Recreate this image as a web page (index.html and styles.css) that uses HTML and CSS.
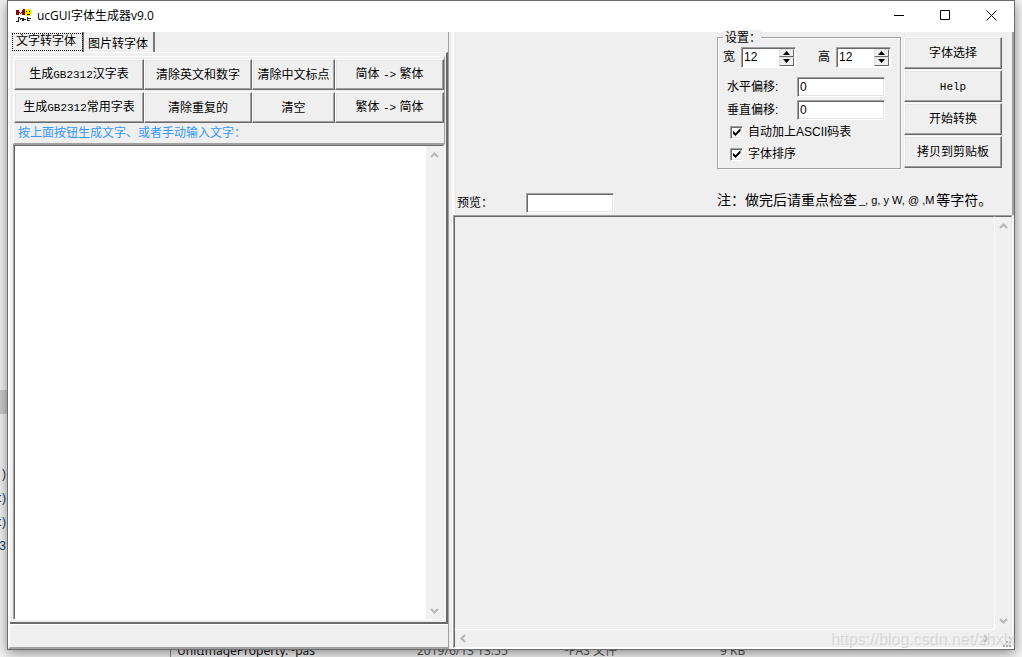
FILE: index.html
```html
<!DOCTYPE html>
<html lang="zh-CN">
<head>
<meta charset="utf-8">
<title>ucGUI字体生成器v9.0</title>
<link rel="stylesheet" href="styles.css">
</head>
<body>
<div class="desktop">
  <div class="behind-left">
    <span class="behind-selected"></span>
    <span>)</span><span>:)</span><span>:)</span><span>3</span>
  </div>
  <div class="behind-row">
    <span class="file-name">UnitImageProperty.~pas</span>
    <span class="file-date">2019/6/13 13:55</span>
    <span class="file-type">~PAS 文件</span>
    <span class="file-size">9 KB</span>
  </div>
</div>
<main class="window">
  <header class="titlebar">
    <svg class="logo" width="16" height="16" viewBox="0 0 16 16" shape-rendering="crispEdges" aria-hidden="true">
      <path fill="#8b0000" d="M0 2h3v2h1v1h1V4h1V2h3v5H6V5H5v1H4V5H3v2H0zM7 1h2v1H7z"/>
      <path fill="#f5f000" d="M10 1h4v1h1v1h1v3h-1v1h-1v1h-4V7H9V2h1z"/>
      <path fill="#222" d="M10 3h1v1h-1zM13 3h1v1h-1zM11 6h3v1h-3z"/>
      <path fill="#222" d="M2 9h2v1H2zM2 10h1v3H2zM0 13h3v1H0zM4 10h3v3H6v-2H5v1H4zM7 10h1v1h2v1H8v1H7zM11 9h1v1h3v1h-3v1h2v1h-3z"/>
    </svg>
    <h1 class="title">ucGUI字体生成器v9.0</h1>
    <div class="caption-buttons">
      <button aria-label="最小化"><svg width="11" height="11"><path d="M0 5.5h10"/></svg></button>
      <button aria-label="最大化"><svg width="11" height="11"><path d="M.5.5h9v9h-9z"/></svg></button>
      <button aria-label="关闭"><svg width="11" height="11"><path d="M.5.5l10 10M10.5.5l-10 10"/></svg></button>
    </div>
  </header>
  <div class="content">
    <section class="left-pane">
      <div class="tabs" role="tablist">
        <button class="tab tab-active" role="tab" aria-selected="true">文字转字体</button>
        <button class="tab" role="tab" aria-selected="false">图片转字体</button>
      </div>
      <div class="tab-page">
        <div class="tool-panel">
          <div class="tool-grid">
            <button class="btn">生成<span class="mono">GB2312</span>汉字表</button>
            <button class="btn">清除英文和数字</button>
            <button class="btn">清除中文标点</button>
            <button class="btn">简体 <span class="mono">-&gt;</span> 繁体</button>
            <button class="btn">生成<span class="mono">GB2312</span>常用字表</button>
            <button class="btn">清除重复的</button>
            <button class="btn">清空</button>
            <button class="btn">繁体 <span class="mono">-&gt;</span> 简体</button>
          </div>
          <label class="hint" for="source">按上面按钮生成文字、或者手动输入文字：</label>
        </div>
        <div class="memo source-memo">
          <textarea id="source"></textarea>
          <div class="scroll-v">
            <button aria-label="向上滚动"><svg width="9" height="6"><path d="M1 5l3.500-3.500L8 5"/></svg></button>
            <button aria-label="向下滚动"><svg width="9" height="6"><path d="M1 1l3.500 3.500L8 1"/></svg></button>
          </div>
        </div>
      </div>
      <div class="status"></div>
    </section>
    <section class="right-pane">
      <div class="options">
        <div class="preview">
          <label for="preview">预览：</label>
          <input id="preview" class="field" type="text">
        </div>
        <div class="settings" role="group" aria-labelledby="settings-title">
          <div class="settings-title" id="settings-title">设置：</div>
          <div class="size-row">
            <label for="w">宽</label>
            <div class="spin"><input id="w" type="text" value="12"><div class="spin-buttons"><button aria-label="增加宽度"><svg width="7" height="4"><path d="M0 4l3.500-4L7 4z"/></svg></button><button aria-label="减少宽度"><svg width="7" height="4"><path d="M0 0h7L3.500 4z"/></svg></button></div></div>
            <label for="h" class="height-label">高</label>
            <div class="spin"><input id="h" type="text" value="12"><div class="spin-buttons"><button aria-label="增加高度"><svg width="7" height="4"><path d="M0 4l3.500-4L7 4z"/></svg></button><button aria-label="减少高度"><svg width="7" height="4"><path d="M0 0h7L3.500 4z"/></svg></button></div></div>
          </div>
          <div class="offset-row"><label for="dx">水平偏移:</label><input id="dx" class="field" type="text" value="0"></div>
          <div class="offset-row"><label for="dy">垂直偏移:</label><input id="dy" class="field" type="text" value="0"></div>
          <label class="check"><input type="checkbox" checked>自动加上ASCII码表</label>
          <label class="check"><input type="checkbox" checked>字体排序</label>
        </div>
        <div class="actions">
          <button class="btn">字体选择</button>
          <button class="btn"><span class="mono">Help</span></button>
          <button class="btn">开始转换</button>
          <button class="btn">拷贝到剪贴板</button>
        </div>
        <p class="note"><span>注：</span><span>做完后请重点检查</span><span class="note-chars">_, g, y W, @ ,M</span><span>等字符。</span></p>
      </div>
      <div class="memo output-memo">
        <textarea class="output" aria-label="输出" readonly></textarea>
        <div class="scroll-v">
          <button aria-label="向上滚动"><svg width="9" height="6"><path d="M1 5l3.500-3.500L8 5"/></svg></button>
          <button aria-label="向下滚动"><svg width="9" height="6"><path d="M1 1l3.500 3.500L8 1"/></svg></button>
        </div>
        <div class="scroll-h">
          <button aria-label="向左滚动"><svg width="6" height="9"><path d="M5 1L1.500 4.500 5 8"/></svg></button>
          <button aria-label="向右滚动"><svg width="6" height="9"><path d="M1 1l3.500 3.500L1 8"/></svg></button>
        </div>
        <svg class="grip" width="10" height="10" aria-hidden="true"><path d="M7 0h2v2H7zM4 4h2v2H4zM7 4h2v2H7zM1 8h2v2H1zM4 8h2v2H4zM7 8h2v2H7z"/></svg>
      </div>
    </section>
  </div>
</main>
<div class="watermark">https://blog.csdn.net/zhxlx</div>
</body>
</html>
```
FILE: styles.css
```css
* { box-sizing: border-box; }
body {
  margin: 0;
  height: 100vh;
  overflow: hidden;
  background: #f4f4f4;
  color: #000;
  font: 12px/16px "Liberation Sans", "Noto Sans CJK SC", sans-serif;
  padding: 0 7px 7px;
}
button, input, textarea { font: inherit; color: inherit; margin: 0; padding: 0; border: 0; border-radius: 0; }
button { background: none; }
textarea { resize: none; outline: 0; }
svg { display: block; }
.mono { font-family: "Liberation Mono", monospace; font-size: 11px; }

/* Explorer window showing round the edges */
.desktop { position: absolute; inset: 0; overflow: hidden; }
.behind-left {
  position: absolute;
  top: 390px;
  left: 0;
  width: 7px;
  display: flex;
  flex-direction: column;
  align-items: flex-end;
  line-height: 24px;
  color: #123a6b;
}
.behind-left span { padding-right: 1px; }
.behind-left .behind-selected { width: 7px; height: 24px; background: #ccc; margin-bottom: 48px; }
.behind-row {
  position: absolute;
  bottom: -3px;
  left: 170px;
  right: 0;
  height: 18px;
  display: flex;
  padding-left: 6px;
  border-left: 1px solid #888;
  font-family: "Noto Sans", "Noto Sans CJK SC", sans-serif;
  line-height: 18px;
  color: #555;
}
.file-name { width: 240px; color: #111; }
.file-date { width: 145px; }
.file-type { width: 158px; }

.window {
  position: relative;
  height: 100%;
  display: flex;
  flex-direction: column;
  background: #efefef;
  border: 1px solid #6b6b6b;
  box-shadow: 0 3px 12px rgba(0, 0, 0, .45);
}
.titlebar { height: 31px; flex: none; display: flex; align-items: center; background: #fff; padding: 0 0 2px 8px; }
.title { margin: 0 0 0 5px; font: 12px/16px "Open Sans", "Noto Sans CJK SC", sans-serif; }
.caption-buttons { margin-left: auto; display: flex; }
.caption-buttons button { width: 46px; height: 29px; display: grid; place-items: center; }
.caption-buttons path { fill: none; stroke: #000; }

.content { flex: 1; min-height: 0; display: flex; }
.left-pane {
  width: 441px;
  flex: none;
  display: flex;
  flex-direction: column;
  border-left: 2px solid #fff;
  border-right: 1px solid #a0a0a0;
  border-bottom: 2px solid #a0a0a0;
}
.tabs { display: flex; height: 20px; padding-left: 1px; }
.tab { height: 20px; padding: 4px 5px 0 4px; line-height: 16px; border-right: 2px solid #777; white-space: nowrap; }
.tab-active { padding: 0 6px 3px 5px; outline: 1px dotted #000; outline-offset: -2px; }
.tab-page {
  flex: 1;
  min-height: 0;
  display: flex;
  flex-direction: column;
  padding: 3px 1px 2px 3px;
  border-top: 1px solid #fff;
  border-right: 2px solid #696969;
  border-bottom: 2px solid #696969;
}
.tool-panel { border: 1px solid #fff; border-right-color: #a0a0a0; border-bottom-color: #a0a0a0; padding: 2px 0 0; }
.tool-grid { display: grid; grid-template-columns: 130px 108px 83px 1fr; grid-auto-rows: 31px; row-gap: 2px; }
.btn {
  white-space: nowrap;
  line-height: 16px;
  text-align: center;
  border: 1px solid #fff;
  border-right-color: #696969;
  border-bottom-color: #696969;
  box-shadow: inset -1px -1px #a0a0a0, inset 1px 1px #e3e3e3;
}
.hint { display: block; padding-left: 4px; line-height: 20px; color: #3399ff; }

.memo {
  display: grid;
  grid-template-columns: 1fr 18px;
  min-height: 0;
  border: 1px solid #fff;
  border-top-color: #a0a0a0;
  border-left-color: #a0a0a0;
}
.source-memo { flex: 1; }
.memo textarea { width: 100%; height: 100%; border: 1px solid #696969; border-width: 1px 0 0 1px; background: #fff; }
.scroll-v { display: flex; flex-direction: column; justify-content: space-between; border-top: 1px solid #696969; border-right: 1px solid #e3e3e3; background: #f0f0f0; }
.scroll-v button, .scroll-h button { width: 16px; height: 17px; display: grid; place-items: center; }
.scroll-v path, .scroll-h path { fill: none; stroke: #b5b5b5; stroke-width: 2; }
.status { height: 23px; flex: none; border-top: 1px solid #fff; }

.right-pane { flex: 1; min-width: 0; display: flex; flex-direction: column; margin-left: 3px; border-left: 1px solid #fff; }
.options {
  display: grid;
  grid-template-columns: 1fr 184px 98px;
  grid-template-rows: 132px 1fr;
  column-gap: 3px;
  height: 183px;
  padding: 5px 10px 0 3px;
  border-left: 1px solid #fff;
  border-right: 2px solid #a0a0a0;
}
.preview { grid-row: 1 / 3; align-self: end; display: flex; align-items: center; gap: 33px; padding-bottom: 2px; }
.field { width: 88px; height: 20px; padding: 0 2px; background: #fff; border: 1px solid #fff; border-top-color: #a0a0a0; border-left-color: #a0a0a0; box-shadow: inset 1px 1px #696969, inset -1px -1px #e3e3e3; }
.settings { border: 1px solid #a0a0a0; box-shadow: 1px 1px #fff, inset 1px 1px #fff; padding: 0 4px; }
.settings-title { width: 38px; margin: -8px 0 0 1px; padding-left: 2px; background: #efefef; }
.size-row { display: flex; align-items: center; gap: 6px; height: 22px; padding-left: 1px; }
.height-label { margin-left: 16px; }
.spin { display: flex; width: 55px; height: 21px; background: #fff; border: 1px solid #fff; border-top-color: #a0a0a0; border-left-color: #a0a0a0; box-shadow: inset 1px 1px #696969; padding: 1px; }
.spin input { flex: 1; min-width: 0; background: none; padding-left: 1px; }
.spin-buttons { width: 15px; display: grid; grid-template-rows: 1fr 1fr; background: #efefef; }
.spin-buttons button { display: grid; place-items: center; min-height: 0; border: 1px solid #e3e3e3; border-right-color: #696969; border-bottom-color: #696969; }
.offset-row { display: flex; align-items: center; justify-content: space-between; padding: 0 11px 0 5px; height: 23px; }
.size-row + .offset-row { margin-top: 7px; }
.check { display: flex; align-items: center; gap: 5px; height: 22px; padding-left: 8px; }
.check input {
  appearance: none;
  width: 13px;
  height: 13px;
  border: 1px solid #fff;
  border-top-color: #a0a0a0;
  border-left-color: #a0a0a0;
  box-shadow: inset 1px 1px #696969, inset -1px -1px #e3e3e3;
  background: #fff;
  display: grid;
  place-items: center;
}
.check input:checked::before { content: ""; width: 8px; height: 8px; background: #000; clip-path: polygon(0 30%, 38% 65%, 100% 0, 100% 38%, 38% 100%, 0 65%); }
.actions { display: grid; grid-auto-rows: 32px; row-gap: 1px; }
.note { grid-column: 2 / 4; margin: 0; padding-top: 23px; display: flex; font-size: 14px; line-height: 16px; white-space: nowrap; }
.note-chars { padding: 0 2px; font-size: 11px; }

.output-memo { flex: 1; grid-template-rows: 1fr 18px; border-bottom: 2px solid #fff; margin-right: 1px; }
.memo .output { background: #efefef; }
.output-memo .scroll-v { border-left: 1px solid #fff; }
.scroll-h { display: flex; justify-content: space-between; align-items: center; border-left: 1px solid #696969; border-top: 1px solid #fff; }
.grip { align-self: end; justify-self: end; fill: #aaa; }
.watermark { position: absolute; right: 8px; bottom: 8px; font: 16px/20px "Liberation Sans", sans-serif; color: rgba(255, 255, 255, .4); text-shadow: 1px 1px 1px #ccc; pointer-events: none; }
```
